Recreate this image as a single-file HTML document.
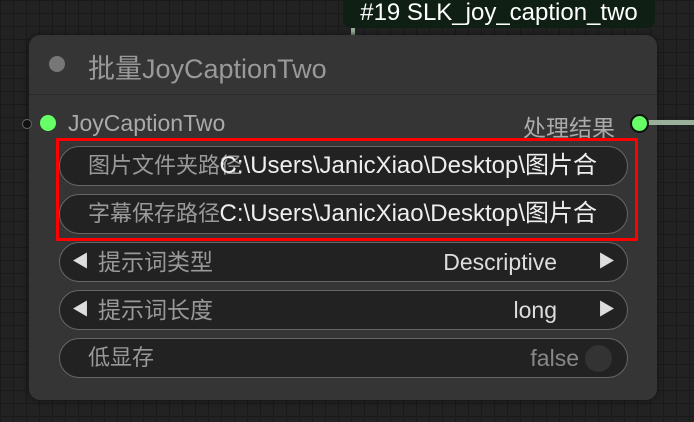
<!DOCTYPE html><html><head><meta charset="utf-8"><style>
body{margin:0;width:694px;height:422px;overflow:hidden;background-color:#222;
background-image:linear-gradient(#1a1a1a 1px,transparent 1px),linear-gradient(90deg,#1a1a1a 1px,transparent 1px);background-size:13px 13px;
font-family:"Liberation Sans","Noto Sans CJK SC",sans-serif;position:relative}
.abs{position:absolute}
.node{left:29px;top:35px;width:628px;height:365px;background:#353535;border-radius:11px;box-shadow:0 0 6px #111}
.w{position:absolute;left:59px;width:567px;height:38px;background:#222;border:1px solid #666;border-radius:20px;font-size:22px;line-height:38px}
.lab{position:absolute;left:28px;color:#999}
.val{position:absolute;right:28px;color:#ddd;font-size:23px}
.arr{position:absolute;color:#ddd;font-size:17px}
</style></head><body>
<div class="abs" style="left:343px;top:-8px;width:312px;height:36px;background:#0f1f14;border-radius:8px;color:#fff;font-size:24px;line-height:42px;text-align:center">#19 SLK_joy_caption_two</div>
<div class="abs" style="left:351px;top:28px;width:4px;height:8px;background:#9ab09a"></div>
<div class="abs node"></div>
<div class="abs" style="left:29px;top:94px;width:628px;height:1px;background:#2a2a2a"></div>
<div class="abs" style="left:49px;top:56px;width:16px;height:16px;border-radius:50%;background:#777"></div>
<div class="abs" style="left:88px;top:47px;font-size:27px;color:#999">批量JoyCaptionTwo</div>
<div class="abs" style="left:22px;top:119px;width:8px;height:8px;border-radius:50%;background:#111;border:1px solid #666"></div>
<div class="abs" style="left:40px;top:115px;width:16px;height:16px;border-radius:50%;background:#6f6"></div>
<div class="abs" style="left:68px;top:110px;font-size:23px;color:#aaa">JoyCaptionTwo</div>
<div class="abs" style="left:523px;top:109px;font-size:23px;color:#aaa">处理结果</div>
<div class="abs" style="left:648px;top:120px;width:46px;height:5px;background:#9ab09a"></div>
<div class="abs" style="left:630px;top:114px;width:15px;height:15px;border-radius:50%;background:#6f6;border:2px solid #111"></div>
<div class="w" style="top:146px"><span class="lab">图片文件夹路径</span><span class="val" style="right:30px;color:#eee;font-size:24px">C:\Users\JanicXiao\Desktop\图片合</span></div>
<div class="w" style="top:194px"><span class="lab">字幕保存路径</span><span class="val" style="right:30px;color:#eee;font-size:24px">C:\Users\JanicXiao\Desktop\图片合</span></div>
<div class="w" style="top:242px"><span class="arr" style="left:12px">◀</span><span class="lab" style="left:38px;font-size:23px">提示词类型</span><span class="val" style="right:70px">Descriptive</span><span class="arr" style="right:12px">▶</span></div>
<div class="w" style="top:290px"><span class="arr" style="left:12px">◀</span><span class="lab" style="left:38px;font-size:23px">提示词长度</span><span class="val" style="right:70px">long</span><span class="arr" style="right:12px">▶</span></div>
<div class="w" style="top:338px"><span class="lab">低显存</span><span class="val" style="right:48px;color:#888">false</span><span class="abs" style="right:15px;top:6px;width:27px;height:27px;border-radius:50%;background:#333"></span></div>
<div class="abs" style="left:56px;top:138px;width:576px;height:97px;border:3px solid #f00"></div>
</body></html>
